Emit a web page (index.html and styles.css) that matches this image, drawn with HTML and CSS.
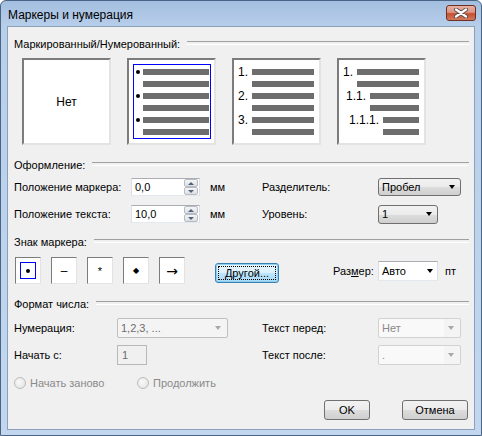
FILE: index.html
```html
<!DOCTYPE html>
<html lang="ru">
<head>
    <meta charset="UTF-8">
    <title>Маркеры и нумерация</title>
    <link rel="stylesheet" href="styles.css">
</head>
<body>
<div class="window">
    <div class="titlebar">
        <span class="title">Маркеры и нумерация</span>
        <span class="close">
            <svg width="16" height="10" viewBox="0 0 16 10">
                <path d="M3 1.5 L13 8.5 M13 1.5 L3 8.5" stroke="#5a4a48" stroke-width="4" stroke-linecap="round"/>
                <path d="M3 1.5 L13 8.5 M13 1.5 L3 8.5" stroke="#fff" stroke-width="2.2" stroke-linecap="round"/>
            </svg>
        </span>
    </div>

    <div class="client">
        <div class="hdr">Маркированный/Нумерованный:</div>
        <div class="previews">
            <div class="pv pv-none">Нет</div>
            <div class="pv">
                <div class="sel-frame">
                    <div class="ln"><i class="dot"></i><b class="bar w66"></b></div>
                    <div class="ln ln-end"><b class="bar w66"></b></div>
                    <div class="ln"><i class="dot"></i><b class="bar w66"></b></div>
                    <div class="ln ln-end"><b class="bar w66"></b></div>
                    <div class="ln"><i class="dot"></i><b class="bar w66"></b></div>
                    <div class="ln ln-end"><b class="bar w66"></b></div>
                </div>
            </div>
            <div class="pv pv-num">
                <div class="ln"><span class="num">1.</span><b class="bar w62"></b></div>
                <div class="ln"><b class="bar w62"></b></div>
                <div class="ln"><span class="num">2.</span><b class="bar w62"></b></div>
                <div class="ln"><b class="bar w62"></b></div>
                <div class="ln"><span class="num">3.</span><b class="bar w62"></b></div>
                <div class="ln"><b class="bar w62"></b></div>
            </div>
            <div class="pv pv-num">
                <div class="ln"><span class="num">1.</span><b class="bar w62"></b></div>
                <div class="ln"><b class="bar w62"></b></div>
                <div class="ln"><span class="num">1.1.</span><b class="bar w49"></b></div>
                <div class="ln"><b class="bar w49"></b></div>
                <div class="ln"><span class="num">1.1.1.</span><b class="bar w36"></b></div>
                <div class="ln"><b class="bar w36"></b></div>
            </div>
        </div>

        <div class="hdr hdr-2">Оформление:</div>
        <div class="frow">
            <div class="left">
                <span class="lbl lbl-w117">Положение маркера:</span>
                <span class="spin"><span class="val">0,0</span><span class="btns"><span class="up"></span><span class="down"></span></span></span>
                <span class="unit">мм</span>
            </div>
            <span class="lbl rlbl">Разделитель:</span>
            <span class="combo w83">Пробел<i class="arr"></i></span>
        </div>
        <div class="frow frow-2">
            <div class="left">
                <span class="lbl lbl-w117">Положение текста:</span>
                <span class="spin"><span class="val">10,0</span><span class="btns"><span class="up"></span><span class="down"></span></span></span>
                <span class="unit">мм</span>
            </div>
            <span class="lbl rlbl">Уровень:</span>
            <span class="combo w60 h19">1<i class="arr"></i></span>
        </div>

        <div class="hdr hdr-3">Знак маркера:</div>
        <div class="mrow">
            <span class="mk"><span class="mk-sel"><i class="dot"></i></span></span>
            <span class="mk">–</span>
            <span class="mk mk-star">*</span>
            <span class="mk mk-dia">◆</span>
            <span class="mk mk-arrow">→</span>
            <span class="btn btn-focus"><span>Другой...</span></span>
            <span class="lbl size-lbl">Раз<u>м</u>ер:</span>
            <span class="ecombo">Авто<i class="arr"></i></span>
            <span class="unit unit-pt">пт</span>
        </div>

        <div class="hdr hdr-4">Формат числа:</div>
        <div class="frow frow-num">
            <div class="left">
                <span class="lbl lbl-w103">Нумерация:</span>
                <span class="dcombo w111">1,2,3, ...<i class="arr"></i></span>
            </div>
            <span class="lbl rlbl">Текст перед:</span>
            <span class="dcombo dcombo-light w83">Нет<i class="arr"></i></span>
        </div>
        <div class="frow frow-num">
            <div class="left">
                <span class="lbl lbl-w103">Начать с:</span>
                <span class="dinput">1</span>
            </div>
            <span class="lbl rlbl">Текст после:</span>
            <span class="dcombo dcombo-light w83">.<i class="arr"></i></span>
        </div>

        <div class="radios">
            <label class="radio radio-1"><i class="circ"></i>Начать заново</label>
            <label class="radio"><i class="circ"></i>Продолжить</label>
        </div>

        <div class="buttons">
            <span class="btn btn-ok">OK</span>
            <span class="btn btn-cancel">Отмена</span>
        </div>
    </div>
</div>
</body>
</html>
```

FILE: styles.css
```css
*{
    margin:0;
    padding:0;
    box-sizing:border-box;
}
html,body{
    width:100%;
    height:100%;
}
body{
    font-family:"Liberation Sans",Arial,sans-serif;
    font-size:11px;
    color:#000;
    background:#fff;
}
.window{
    width:482px;
    height:436px;
    border:1px solid #4a6486;
    border-radius:6px 6px 0 0;
    padding:0 6px 5px;
    display:flex;
    flex-direction:column;
    background:linear-gradient(#a3bedf,#b8cfea 26px,#c2d7ef);
}
.titlebar{
    height:25px;
    display:flex;
    align-items:flex-start;
    justify-content:space-between;
}
.title{
    margin-top:6px;
    padding-left:1px;
    line-height:16px;
    font-size:12px;
}
.close{
    margin-top:4px;
    margin-right:-1px;
    width:30px;
    height:16px;
    border:1px solid #6e3024;
    border-radius:3px;
    display:flex;
    align-items:center;
    justify-content:center;
    background:linear-gradient(#e6b0a2,#dc9684 45%,#c4502f 55%,#d27a60);
}
.client{
    flex:1;
    border:1px solid #8ba0bb;
    background:#f0f0f0;
    padding:10px 5px 0 6px;
    display:flex;
    flex-direction:column;
}

/* заголовки групп с линией */
.hdr{
    display:flex;
    height:14px;
    line-height:14px;
}
.hdr::after{
    content:"";
    flex:1;
    margin:4px 0 0 7px;
    height:2px;
    border-top:1px solid #a0a0a0;
    border-bottom:1px solid #fff;
}
.hdr-2{margin-top:13px;}
.hdr-3{margin-top:12px;}
.hdr-4{margin-top:13px;}

/* превью */
.previews{
    display:flex;
    gap:16px;
    margin-top:7px;
    padding-left:8px;
    height:87px;
}
.pv{
    width:89px;
    height:87px;
    background:#fff;
    border:2px solid;
    border-color:#7c7c7c #e3e3e3 #e3e3e3 #7c7c7c;
}
.pv-none{
    display:flex;
    align-items:center;
    justify-content:center;
    font-size:12px;
}
.sel-frame{
    margin:4px 3px 4px 4px;
    height:75px;
    border:1px solid #0000ff;
    padding:1px 1px 0 2px;
}
.ln{
    height:12px;
    display:flex;
    align-items:center;
    justify-content:flex-end;
}
.sel-frame .ln{justify-content:flex-start;}
.sel-frame .ln-end{padding-left:7px;}
.dot{
    width:4px;
    height:4px;
    border-radius:50%;
    background:#000;
    margin-right:3px;
}
.bar{
    height:6px;
    background:#6d6d6d;
}
.w66{width:66px;}
.w62{width:62px;}
.w49{width:49px;}
.w36{width:36px;}
.pv-num{
    padding:6px 5px 0 0;
}
.num{
    font-size:12px;
    line-height:12px;
    margin-right:4px;
}

/* строки формы */
.frow{
    display:flex;
    align-items:center;
    height:18px;
    margin-top:6px;
}
.frow-2{margin-top:9px;}
.frow-num{
    height:20px;
    margin-top:7px;
}
.left{
    width:248px;
    display:flex;
    align-items:center;
}
.lbl-w117{width:117px;}
.lbl-w103{width:103px;}
.rlbl{width:116px;}
.unit{margin-left:10px;}

.spin{
    width:69px;
    height:18px;
    background:#fff;
    border:1px solid;
    border-color:#abadb3 #dbdfe6 #e3e9ef #dbdfe6;
    display:flex;
}
.spin .val{
    flex:1;
    padding-left:3px;
    line-height:16px;
}
.spin .btns{
    width:16px;
    padding:0 1px 0 1px;
    display:flex;
    flex-direction:column;
}
.spin .btns span{
    flex:1;
    border:1px solid #b6bcc6;
    border-radius:2px;
    background:linear-gradient(#f6f6f6,#dedede);
    display:flex;
    align-items:center;
    justify-content:center;
}
.spin .up::after{
    content:"";
    border-left:3px solid transparent;
    border-right:3px solid transparent;
    border-bottom:3px solid #4f6380;
}
.spin .down::after{
    content:"";
    border-left:3px solid transparent;
    border-right:3px solid transparent;
    border-top:3px solid #4f6380;
}

.combo,.ecombo,.dcombo{
    height:18px;
    display:flex;
    align-items:center;
    padding-left:3px;
}
.combo{
    border:1px solid #707070;
    border-radius:3px;
    background:linear-gradient(#f2f2f2,#ebebeb 50%,#dddddd 50%,#cfcfcf);
}
.h19{height:19px;}
.w83{width:83px;}
.w60{width:60px;}
.w111{width:111px;}
.arr{
    margin-left:auto;
    margin-right:5px;
    border-left:3.5px solid transparent;
    border-right:3.5px solid transparent;
    border-top:4px solid #000;
}
.ecombo{
    width:60px;
    height:20px;
    margin-left:0;
    background:#fff;
    border:1px solid #abadb3;
    border-color:#abadb3 #dbdfe6 #e3e9ef #dbdfe6;
}
.ecombo .arr{margin-right:4px;}
.dcombo{
    height:20px;
    border:1px solid #c0c0c0;
    border-radius:2px;
    background:#f4f4f4;
    color:#6d6d6d;
}
.dcombo .arr{
    border-top-color:#a8a8a8;
    margin-right:6px;
}
.dcombo-light{
    border-color:#d2d2d2;
    background:linear-gradient(to right,#f9f9f9 80%,#f4f4f4 80%);
    color:#8a8a8a;
}
.dinput{
    width:30px;
    height:20px;
    border:1px solid #b8b8b8;
    background:#f0f0f0;
    color:#6d6d6d;
    padding-left:4px;
    line-height:18px;
}

/* знак маркера */
.mrow{
    display:flex;
    align-items:center;
    height:27px;
    margin-top:8px;
    padding-left:1px;
}
.mk{
    width:26px;
    height:27px;
    margin-right:10px;
    background:#fff;
    border:1px solid;
    border-color:#7c7c7c #e3e3e3 #e3e3e3 #7c7c7c;
    display:flex;
    align-items:center;
    justify-content:center;
    font-size:12px;
}
.mk-sel{
    width:16px;
    height:17px;
    border:1px solid #0000ff;
    display:flex;
    align-items:center;
    justify-content:center;
}
.mk-sel .dot{margin:0;}
.mk-star{font-size:11px;}
.mk-dia{font-size:8px;font-family:"DejaVu Sans",sans-serif;}
.mk-arrow{font-size:14px;font-family:"DejaVu Sans",sans-serif;}
.btn{
    height:20px;
    border:1px solid #707070;
    border-radius:3px;
    display:flex;
    align-items:center;
    justify-content:center;
    background:linear-gradient(#f2f2f2,#ebebeb 50%,#dddddd 50%,#cfcfcf);
}
.btn-focus{
    width:64px;
    margin:5px 0 0 20px;
    padding:2px;
    border-color:#3c7fb1;
    box-shadow:inset 0 0 0 1px #8fd0f2;
    background:linear-gradient(#eaf6fd,#d9f0fc 50%,#bee6fd 50%,#a7d9f5);
}
.btn-focus span{
    width:100%;
    height:100%;
    border:1px dotted #000;
    display:flex;
    align-items:center;
    justify-content:center;
}
.size-lbl{
    margin-left:54px;
    width:45px;
}
.size-lbl u{text-decoration:underline;}
.unit-pt{margin-left:7px;}

/* радио и кнопки */
.radios{
    display:flex;
    align-items:center;
    height:14px;
    margin-top:11px;
    color:#8a8a8a;
}
.radio{
    display:flex;
    align-items:center;
}
.radio-1{width:123px;}
.circ{
    width:12px;
    height:12px;
    margin-right:4px;
    border-radius:50%;
    border:1px solid #bcbcbc;
    background:radial-gradient(circle at 40% 40%,#fafafa,#dedede);
}
.buttons{
    display:flex;
    justify-content:flex-end;
    gap:32px;
    margin-top:10px;
    padding-right:1px;
}
.btn-ok{width:46px;}
.btn-cancel{width:66px;}
```
